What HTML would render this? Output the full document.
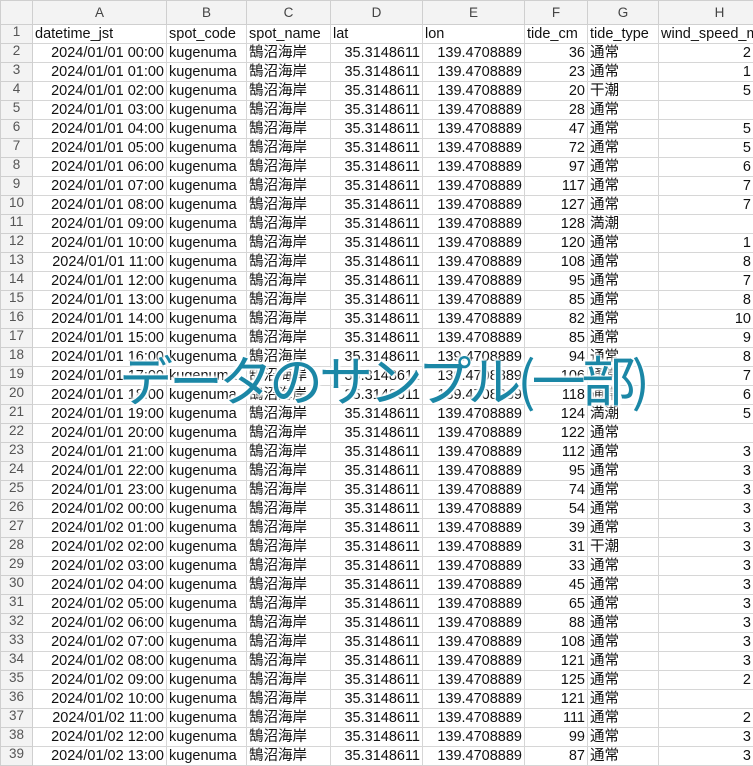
<!DOCTYPE html>
<html><head><meta charset="utf-8"><style>
body{margin:0;width:753px;height:753px;overflow:hidden;background:#fff;font-family:"Liberation Sans","Noto Sans CJK JP",sans-serif;font-size:14.5px;color:#111;position:relative}
table{border-collapse:collapse;table-layout:fixed;position:absolute;left:0;top:0;width:780px}
td{height:18px;border:1px solid #d6d6d6;padding:0 2px;white-space:nowrap;overflow:hidden;line-height:18px}
tr.h td{height:23px;background:#f3f3f3;color:#444;text-align:center;border-color:#cfcfcf;font-size:13.5px}
td.n{background:#f3f3f3;color:#555;text-align:center;font-size:13.5px;border-color:#cfcfcf;line-height:14px;vertical-align:top}
.r{text-align:right}
td.w{text-align:right;padding-right:29px}
.ov{position:absolute;left:119px;top:343px;font-size:54px;color:#1b87a6;font-family:"Noto Sans CJK JP",sans-serif;font-weight:400;text-shadow:0 0 2px #fff,0 0 2px #fff,0 0 3px #fff,2px 2px 2px #fff,-2px -2px 2px #fff;letter-spacing:-4px;line-height:70px;white-space:nowrap}
</style></head><body>
<table>
<colgroup><col style="width:32px"><col style="width:134px"><col style="width:80px"><col style="width:84px"><col style="width:92px"><col style="width:102px"><col style="width:63px"><col style="width:71px"><col style="width:122px"></colgroup>
<tr class="h"><td></td><td>A</td><td>B</td><td>C</td><td>D</td><td>E</td><td>F</td><td>G</td><td>H</td></tr>
<tr><td class="n">1</td><td>datetime_jst</td><td>spot_code</td><td>spot_name</td><td>lat</td><td>lon</td><td>tide_cm</td><td>tide_type</td><td>wind_speed_m</td></tr>
<tr><td class="n">2</td><td class="r">2024/01/01 00:00</td><td>kugenuma</td><td>鵠沼海岸</td><td class="r">35.3148611</td><td class="r">139.4708889</td><td class="r">36</td><td>通常</td><td class="w">2</td></tr>
<tr><td class="n">3</td><td class="r">2024/01/01 01:00</td><td>kugenuma</td><td>鵠沼海岸</td><td class="r">35.3148611</td><td class="r">139.4708889</td><td class="r">23</td><td>通常</td><td class="w">1</td></tr>
<tr><td class="n">4</td><td class="r">2024/01/01 02:00</td><td>kugenuma</td><td>鵠沼海岸</td><td class="r">35.3148611</td><td class="r">139.4708889</td><td class="r">20</td><td>干潮</td><td class="w">5</td></tr>
<tr><td class="n">5</td><td class="r">2024/01/01 03:00</td><td>kugenuma</td><td>鵠沼海岸</td><td class="r">35.3148611</td><td class="r">139.4708889</td><td class="r">28</td><td>通常</td><td class="w"></td></tr>
<tr><td class="n">6</td><td class="r">2024/01/01 04:00</td><td>kugenuma</td><td>鵠沼海岸</td><td class="r">35.3148611</td><td class="r">139.4708889</td><td class="r">47</td><td>通常</td><td class="w">5</td></tr>
<tr><td class="n">7</td><td class="r">2024/01/01 05:00</td><td>kugenuma</td><td>鵠沼海岸</td><td class="r">35.3148611</td><td class="r">139.4708889</td><td class="r">72</td><td>通常</td><td class="w">5</td></tr>
<tr><td class="n">8</td><td class="r">2024/01/01 06:00</td><td>kugenuma</td><td>鵠沼海岸</td><td class="r">35.3148611</td><td class="r">139.4708889</td><td class="r">97</td><td>通常</td><td class="w">6</td></tr>
<tr><td class="n">9</td><td class="r">2024/01/01 07:00</td><td>kugenuma</td><td>鵠沼海岸</td><td class="r">35.3148611</td><td class="r">139.4708889</td><td class="r">117</td><td>通常</td><td class="w">7</td></tr>
<tr><td class="n">10</td><td class="r">2024/01/01 08:00</td><td>kugenuma</td><td>鵠沼海岸</td><td class="r">35.3148611</td><td class="r">139.4708889</td><td class="r">127</td><td>通常</td><td class="w">7</td></tr>
<tr><td class="n">11</td><td class="r">2024/01/01 09:00</td><td>kugenuma</td><td>鵠沼海岸</td><td class="r">35.3148611</td><td class="r">139.4708889</td><td class="r">128</td><td>満潮</td><td class="w"></td></tr>
<tr><td class="n">12</td><td class="r">2024/01/01 10:00</td><td>kugenuma</td><td>鵠沼海岸</td><td class="r">35.3148611</td><td class="r">139.4708889</td><td class="r">120</td><td>通常</td><td class="w">1</td></tr>
<tr><td class="n">13</td><td class="r">2024/01/01 11:00</td><td>kugenuma</td><td>鵠沼海岸</td><td class="r">35.3148611</td><td class="r">139.4708889</td><td class="r">108</td><td>通常</td><td class="w">8</td></tr>
<tr><td class="n">14</td><td class="r">2024/01/01 12:00</td><td>kugenuma</td><td>鵠沼海岸</td><td class="r">35.3148611</td><td class="r">139.4708889</td><td class="r">95</td><td>通常</td><td class="w">7</td></tr>
<tr><td class="n">15</td><td class="r">2024/01/01 13:00</td><td>kugenuma</td><td>鵠沼海岸</td><td class="r">35.3148611</td><td class="r">139.4708889</td><td class="r">85</td><td>通常</td><td class="w">8</td></tr>
<tr><td class="n">16</td><td class="r">2024/01/01 14:00</td><td>kugenuma</td><td>鵠沼海岸</td><td class="r">35.3148611</td><td class="r">139.4708889</td><td class="r">82</td><td>通常</td><td class="w">10</td></tr>
<tr><td class="n">17</td><td class="r">2024/01/01 15:00</td><td>kugenuma</td><td>鵠沼海岸</td><td class="r">35.3148611</td><td class="r">139.4708889</td><td class="r">85</td><td>通常</td><td class="w">9</td></tr>
<tr><td class="n">18</td><td class="r">2024/01/01 16:00</td><td>kugenuma</td><td>鵠沼海岸</td><td class="r">35.3148611</td><td class="r">139.4708889</td><td class="r">94</td><td>通常</td><td class="w">8</td></tr>
<tr><td class="n">19</td><td class="r">2024/01/01 17:00</td><td>kugenuma</td><td>鵠沼海岸</td><td class="r">35.3148611</td><td class="r">139.4708889</td><td class="r">106</td><td>通常</td><td class="w">7</td></tr>
<tr><td class="n">20</td><td class="r">2024/01/01 18:00</td><td>kugenuma</td><td>鵠沼海岸</td><td class="r">35.3148611</td><td class="r">139.4708889</td><td class="r">118</td><td>通常</td><td class="w">6</td></tr>
<tr><td class="n">21</td><td class="r">2024/01/01 19:00</td><td>kugenuma</td><td>鵠沼海岸</td><td class="r">35.3148611</td><td class="r">139.4708889</td><td class="r">124</td><td>満潮</td><td class="w">5</td></tr>
<tr><td class="n">22</td><td class="r">2024/01/01 20:00</td><td>kugenuma</td><td>鵠沼海岸</td><td class="r">35.3148611</td><td class="r">139.4708889</td><td class="r">122</td><td>通常</td><td class="w"></td></tr>
<tr><td class="n">23</td><td class="r">2024/01/01 21:00</td><td>kugenuma</td><td>鵠沼海岸</td><td class="r">35.3148611</td><td class="r">139.4708889</td><td class="r">112</td><td>通常</td><td class="w">3</td></tr>
<tr><td class="n">24</td><td class="r">2024/01/01 22:00</td><td>kugenuma</td><td>鵠沼海岸</td><td class="r">35.3148611</td><td class="r">139.4708889</td><td class="r">95</td><td>通常</td><td class="w">3</td></tr>
<tr><td class="n">25</td><td class="r">2024/01/01 23:00</td><td>kugenuma</td><td>鵠沼海岸</td><td class="r">35.3148611</td><td class="r">139.4708889</td><td class="r">74</td><td>通常</td><td class="w">3</td></tr>
<tr><td class="n">26</td><td class="r">2024/01/02 00:00</td><td>kugenuma</td><td>鵠沼海岸</td><td class="r">35.3148611</td><td class="r">139.4708889</td><td class="r">54</td><td>通常</td><td class="w">3</td></tr>
<tr><td class="n">27</td><td class="r">2024/01/02 01:00</td><td>kugenuma</td><td>鵠沼海岸</td><td class="r">35.3148611</td><td class="r">139.4708889</td><td class="r">39</td><td>通常</td><td class="w">3</td></tr>
<tr><td class="n">28</td><td class="r">2024/01/02 02:00</td><td>kugenuma</td><td>鵠沼海岸</td><td class="r">35.3148611</td><td class="r">139.4708889</td><td class="r">31</td><td>干潮</td><td class="w">3</td></tr>
<tr><td class="n">29</td><td class="r">2024/01/02 03:00</td><td>kugenuma</td><td>鵠沼海岸</td><td class="r">35.3148611</td><td class="r">139.4708889</td><td class="r">33</td><td>通常</td><td class="w">3</td></tr>
<tr><td class="n">30</td><td class="r">2024/01/02 04:00</td><td>kugenuma</td><td>鵠沼海岸</td><td class="r">35.3148611</td><td class="r">139.4708889</td><td class="r">45</td><td>通常</td><td class="w">3</td></tr>
<tr><td class="n">31</td><td class="r">2024/01/02 05:00</td><td>kugenuma</td><td>鵠沼海岸</td><td class="r">35.3148611</td><td class="r">139.4708889</td><td class="r">65</td><td>通常</td><td class="w">3</td></tr>
<tr><td class="n">32</td><td class="r">2024/01/02 06:00</td><td>kugenuma</td><td>鵠沼海岸</td><td class="r">35.3148611</td><td class="r">139.4708889</td><td class="r">88</td><td>通常</td><td class="w">3</td></tr>
<tr><td class="n">33</td><td class="r">2024/01/02 07:00</td><td>kugenuma</td><td>鵠沼海岸</td><td class="r">35.3148611</td><td class="r">139.4708889</td><td class="r">108</td><td>通常</td><td class="w">3</td></tr>
<tr><td class="n">34</td><td class="r">2024/01/02 08:00</td><td>kugenuma</td><td>鵠沼海岸</td><td class="r">35.3148611</td><td class="r">139.4708889</td><td class="r">121</td><td>通常</td><td class="w">3</td></tr>
<tr><td class="n">35</td><td class="r">2024/01/02 09:00</td><td>kugenuma</td><td>鵠沼海岸</td><td class="r">35.3148611</td><td class="r">139.4708889</td><td class="r">125</td><td>通常</td><td class="w">2</td></tr>
<tr><td class="n">36</td><td class="r">2024/01/02 10:00</td><td>kugenuma</td><td>鵠沼海岸</td><td class="r">35.3148611</td><td class="r">139.4708889</td><td class="r">121</td><td>通常</td><td class="w"></td></tr>
<tr><td class="n">37</td><td class="r">2024/01/02 11:00</td><td>kugenuma</td><td>鵠沼海岸</td><td class="r">35.3148611</td><td class="r">139.4708889</td><td class="r">111</td><td>通常</td><td class="w">2</td></tr>
<tr><td class="n">38</td><td class="r">2024/01/02 12:00</td><td>kugenuma</td><td>鵠沼海岸</td><td class="r">35.3148611</td><td class="r">139.4708889</td><td class="r">99</td><td>通常</td><td class="w">3</td></tr>
<tr><td class="n">39</td><td class="r">2024/01/02 13:00</td><td>kugenuma</td><td>鵠沼海岸</td><td class="r">35.3148611</td><td class="r">139.4708889</td><td class="r">87</td><td>通常</td><td class="w">3</td></tr>
</table>
<div class="ov">データのサンプル(一部)</div>
</body></html>
